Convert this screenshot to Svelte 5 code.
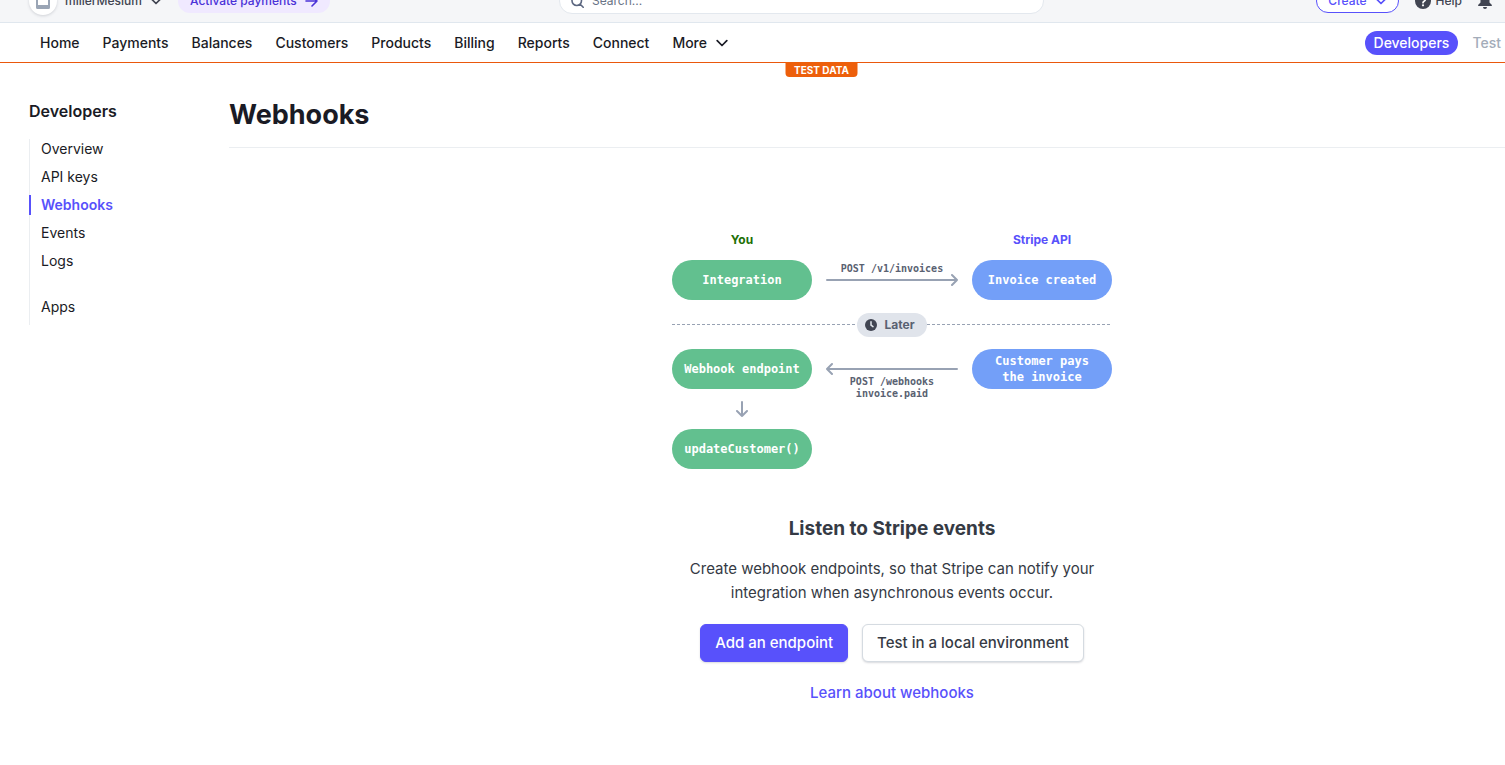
<script>
  const navItems = ['Home', 'Payments', 'Balances', 'Customers', 'Products', 'Billing', 'Reports', 'Connect'];
  const sections = [
    ['Overview', 'API keys', 'Webhooks', 'Events', 'Logs'],
    ['Apps']
  ];
  const current = 'Webhooks';
</script>

{#snippet chevron(size)}
  <svg class="chevron" width={size} height={size} viewBox="0 0 12 12" aria-hidden="true">
    <path d="M1.2 3.700 6 8.500 10.800 3.700" fill="none" stroke="currentColor" stroke-width="1.7" stroke-linecap="round" stroke-linejoin="round" />
  </svg>
{/snippet}

<div class="page">
  <header>
    <div class="topbar">
      <div class="start">
        <button class="account">
          <span class="avatar">
            <svg width="14" height="16" viewBox="0 0 14 16" aria-hidden="true">
              <path fill="#9aa5b5" d="M1.5 0h11L14 5v9.5a1.5 1.5 0 0 1-1.5 1.5h-11A1.5 1.5 0 0 1 0 14.500V5z" />
              <path fill="#fff" d="M2 5h10v7H2z" />
            </svg>
          </span>
          <span>millerMesium</span>
          {@render chevron(12)}
        </button>
        <button class="activate">
          Activate payments
          <svg width="13" height="12" viewBox="0 0 13 12" aria-hidden="true">
            <path d="M1 6h11M7 1l5 5-5 5" fill="none" stroke="currentColor" stroke-width="1.6" stroke-linecap="round" stroke-linejoin="round" />
          </svg>
        </button>
      </div>
      <label class="search">
        <svg width="13" height="13" viewBox="0 0 13 13" aria-hidden="true">
          <path d="M10.500 5.750a4.750 4.750 0 1 1-9.500 0 4.750 4.750 0 0 1 9.500 0zM9.200 9.200 12.200 12.200" fill="none" stroke="#5c6780" stroke-width="1.6" stroke-linecap="round" />
        </svg>
        <input type="text" placeholder="Search..." aria-label="Search" />
      </label>
      <div class="end">
        <button class="create">Create {@render chevron(12)}</button>
        <button class="help">
          <svg width="16" height="16" viewBox="0 0 16 16" aria-hidden="true">
            <circle cx="8" cy="8" r="8" fill="#414552" />
            <path d="M5.700 6.200a2.300 2.300 0 1 1 3.400 2c-.7.400-1.100.7-1.100 1.500" fill="none" stroke="#fff" stroke-width="1.700" stroke-linecap="round" />
            <circle cx="8" cy="12.300" r="1.100" fill="#fff" />
          </svg>
          Help
        </button>
        <button class="bell" aria-label="Notifications">
          <svg width="14" height="16" viewBox="0 0 14 16" aria-hidden="true">
            <path fill="#414552" d="M7 0a1 1 0 0 1 1 1v.6A4.500 4.500 0 0 1 11.500 6v3.500l2.200 2.200c.6.600.2 1.300-.4 1.300H.700c-.6 0-1-.7-.4-1.300L2.500 9.500V6A4.500 4.500 0 0 1 6 1.600V1a1 1 0 0 1 1-1zM5 14h4a2 2 0 0 1-4 0z" />
          </svg>
        </button>
      </div>
    </div>
    <div class="navbar">
      <nav aria-label="Main">
        {#each navItems as item}
          <a href="#{item.toLowerCase()}">{item}</a>
        {/each}
        <button class="more">More {@render chevron(12)}</button>
      </nav>
      <div class="mode">
        <a class="developers" href="#developers">Developers</a>
        <span>Test</span>
      </div>
      <span class="badge">TEST DATA</span>
    </div>
  </header>

  <div class="body">
    <aside>
      <h2>Developers</h2>
      <nav class="side" aria-label="Developers">
        {#each sections as section}
          <ul>
            {#each section as item}
              <li>
                <a href="#{item}" class:active={item === current} aria-current={item === current ? 'page' : undefined}>{item}</a>
              </li>
            {/each}
          </ul>
        {/each}
      </nav>
    </aside>

    <main>
      <h1>Webhooks</h1>
      <div class="intro">
        <div class="diagram">
          <div class="row labels">
            <strong class="you">You</strong>
            <span></span>
            <strong class="api">Stripe API</strong>
          </div>
          <div class="row">
            <div class="node green">Integration</div>
            <div class="link">
              <span class="caption">POST /v1/invoices</span>
              <svg class="arrow" width="132" height="14" viewBox="0 0 132 14" aria-hidden="true">
                <path d="M1 7h130M126 2l5 5-5 5" />
              </svg>
              <span class="caption"></span>
            </div>
            <div class="node blue">Invoice created</div>
          </div>
          <div class="later">
            <span class="pill">
              <svg width="12" height="12" viewBox="0 0 12 12" aria-hidden="true">
                <circle cx="6" cy="6" r="6" fill="#414552" />
                <path d="M6 2.700V6.200L8 7.600" fill="none" stroke="#e3e8ee" stroke-width="1.500" stroke-linecap="round" />
              </svg>
              Later
            </span>
          </div>
          <div class="row">
            <div class="node green">Webhook endpoint</div>
            <div class="link">
              <span class="caption"></span>
              <svg class="arrow" width="132" height="14" viewBox="0 0 132 14" aria-hidden="true">
                <path d="M131 7H1M6 2 1 7l5 5" />
              </svg>
              <span class="caption">POST /webhooks<br />invoice.paid</span>
            </div>
            <div class="node blue">Customer pays<br />the invoice</div>
          </div>
          <div class="down">
            <svg class="arrow" width="14" height="16" viewBox="0 0 14 16" aria-hidden="true">
              <path d="M7 1v14M2 10l5 5 5-5" />
            </svg>
          </div>
          <div class="row">
            <div class="node green">updateCustomer()</div>
          </div>
        </div>

        <h3>Listen to Stripe events</h3>
        <p>Create webhook endpoints, so that Stripe can notify your integration when asynchronous events occur.</p>
        <div class="actions">
          <button class="btn primary">Add an endpoint</button>
          <button class="btn">Test in a local environment</button>
        </div>
        <a class="learn" href="#learn">Learn about webhooks</a>
      </div>
    </main>
  </div>
</div>

<style>
  :global(body) {
    margin: 0;
    background: #fff;
  }
  .page {
    overflow: hidden;
    font-family: Inter, 'Liberation Sans', sans-serif;
    font-size: 14px;
    line-height: 20px;
    color: #1a1b25;
  }
  button {
    display: flex;
    align-items: center;
    margin: 0;
    padding: 0;
    border: 0;
    background: none;
    color: inherit;
    font: inherit;
    white-space: nowrap;
    cursor: pointer;
  }
  a {
    color: inherit;
    text-decoration: none;
  }
  svg {
    flex: none;
  }

  /* The top bar is partly scrolled out of view. */
  .topbar {
    display: grid;
    grid-template-columns: 530px minmax(0, 485px) 1fr;
    align-items: center;
    height: 42px;
    margin-top: -20px;
    padding: 0 13px 0 29px;
    background: #f5f6f8;
    border-bottom: 1px solid #e0e7ee;
    font-size: 12px;
    font-weight: 500;
    color: #414552;
  }
  .start,
  .end {
    display: flex;
    align-items: center;
  }
  .start {
    gap: 16px;
  }
  .end {
    justify-content: flex-end;
    gap: 16px;
  }
  .account {
    gap: 8px;
  }
  .avatar {
    display: grid;
    place-items: center;
    width: 28px;
    height: 28px;
    border-radius: 50%;
    background: #fff;
    box-shadow: 0 1px 3px rgba(60, 66, 87, 0.2);
  }
  .activate {
    gap: 8px;
    height: 24px;
    padding: 0 12px;
    border-radius: 12px;
    background: #f0e9ff;
    color: #4b32d8;
  }
  .search {
    display: flex;
    align-items: center;
    gap: 8px;
    box-sizing: border-box;
    height: 26px;
    padding: 0 11px;
    border: 1px solid #e3e8ee;
    border-radius: 13px;
    background: #fff;
  }
  .search input {
    flex: 1;
    min-width: 0;
    padding: 0;
    border: 0;
    outline: 0;
    background: none;
    font: inherit;
    font-weight: 400;
  }
  .search input::placeholder {
    color: #687385;
    opacity: 1;
  }
  .create {
    gap: 8px;
    height: 24px;
    padding: 0 11px;
    border: 1px solid #5851fb;
    border-radius: 12px;
    box-sizing: border-box;
    background: #fff;
    color: #5851fb;
  }
  .help {
    gap: 5px;
  }

  .navbar {
    position: relative;
    display: flex;
    align-items: center;
    justify-content: space-between;
    height: 39px;
    padding: 0 4px 0 39px;
    border-bottom: 1px solid #ea580c;
    font-weight: 500;
  }
  .navbar nav {
    display: flex;
    gap: 23px;
    margin-left: 1px;
  }
  .more {
    gap: 9px;
  }
  .mode {
    display: flex;
    align-items: center;
    gap: 14px;
    color: #a3acb9;
  }
  .developers {
    padding: 2px 9px;
    border-radius: 12px;
    background: #5851fb;
    color: #fff;
  }
  .badge {
    position: absolute;
    top: 100%;
    left: calc(50% + 69px);
    transform: translateX(-50%);
    padding: 1px 9px 0;
    border-radius: 0 0 4px 4px;
    background: #ed5f0b;
    color: #fff;
    font-size: 10px;
    font-weight: 700;
    line-height: 14px;
  }

  .body {
    display: flex;
    padding-left: 29px;
  }
  aside {
    flex: none;
    width: 200px;
    padding-top: 38px;
  }
  h2 {
    margin: 0 0 18px;
    font-size: 16px;
    font-weight: 600;
    line-height: 20px;
  }
  .side {
    border-left: 1px solid #ebeef1;
    padding-bottom: 8px;
  }
  ul {
    margin: 0;
    padding: 0;
    list-style: none;
  }
  ul + ul {
    margin-top: 26px;
  }
  li + li {
    margin-top: 8px;
  }
  li a {
    display: block;
    margin-left: -1px;
    padding-left: 12px;
  }
  li a.active {
    border-left: 2px solid #5851fb;
    padding-left: 10px;
    color: #5851fb;
    font-weight: 600;
  }

  main {
    flex: 1;
    min-width: 0;
    margin-right: -50px;
    padding-top: 34px;
  }
  h1 {
    margin: 0;
    padding-bottom: 14px;
    border-bottom: 1px solid #ebeef1;
    font-size: 27px;
    font-weight: 700;
    line-height: 36px;
  }
  .intro {
    display: flex;
    flex-direction: column;
    align-items: center;
    max-width: 440px;
    margin: 0 auto;
    padding: 82px 0 40px;
    color: #353a44;
    text-align: center;
  }
  .diagram {
    width: 100%;
    margin-bottom: 46px;
  }
  .row {
    display: grid;
    grid-template-columns: 140px 1fr 140px;
  }
  .labels {
    margin-bottom: 10px;
    font-size: 12px;
  }
  .labels strong {
    font-weight: 700;
  }
  .you {
    color: #217005;
  }
  .api {
    color: #5851fb;
  }
  .node {
    display: flex;
    align-items: center;
    justify-content: center;
    height: 40px;
    border-radius: 20px;
    color: #fff;
    font: bold 12px/16px 'DejaVu Sans Mono', monospace;
  }
  .green {
    background: #62c08f;
  }
  .blue {
    background: #739ff8;
  }
  .link {
    display: grid;
    grid-template-rows: 13px 14px 13px;
    justify-items: center;
  }
  .caption {
    color: #596171;
    font: bold 10px/12px 'DejaVu Sans Mono', monospace;
    white-space: nowrap;
  }
  .link .caption:first-child {
    padding-top: 3px;
  }
  .arrow path {
    fill: none;
    stroke: #98a2b3;
    stroke-width: 2;
    stroke-linecap: round;
    stroke-linejoin: round;
  }
  .later {
    display: flex;
    align-items: center;
    height: 24px;
    margin: 13px 0 12px;
  }
  .later::before,
  .later::after {
    content: '';
    flex: 1;
    height: 1px;
    margin-bottom: 1px;
    background: repeating-linear-gradient(90deg, #98a2b3 0 3px, transparent 3px 5px);
  }
  .pill {
    display: flex;
    align-items: center;
    gap: 7px;
    height: 24px;
    padding: 0 12px 0 8px;
    border-radius: 12px;
    background: #e0e4eb;
    color: #596171;
    font-size: 12px;
    font-weight: 700;
  }
  .down {
    display: grid;
    place-items: center;
    width: 140px;
    height: 40px;
  }
  h3 {
    margin: 0 0 14px;
    font-size: 19px;
    font-weight: 700;
    line-height: 28px;
  }
  p {
    margin: 0 0 19px;
    padding: 0 8px;
    font-size: 15px;
    line-height: 24px;
  }
  .actions {
    display: flex;
    gap: 14px;
    margin-bottom: 19px;
    font-size: 15px;
    font-weight: 500;
  }
  .btn {
    height: 38px;
    padding: 0 14px;
    border: 1px solid #d5dbe1;
    border-radius: 6px;
    background: #fff;
    box-shadow: 0 1px 2px rgba(60, 66, 87, 0.2);
  }
  .btn.primary {
    border-color: #5851fb;
    background: #5851fb;
    color: #fff;
  }
  .learn {
    color: #5851fb;
    font-size: 15px;
    font-weight: 500;
    line-height: 24px;
  }
</style>
